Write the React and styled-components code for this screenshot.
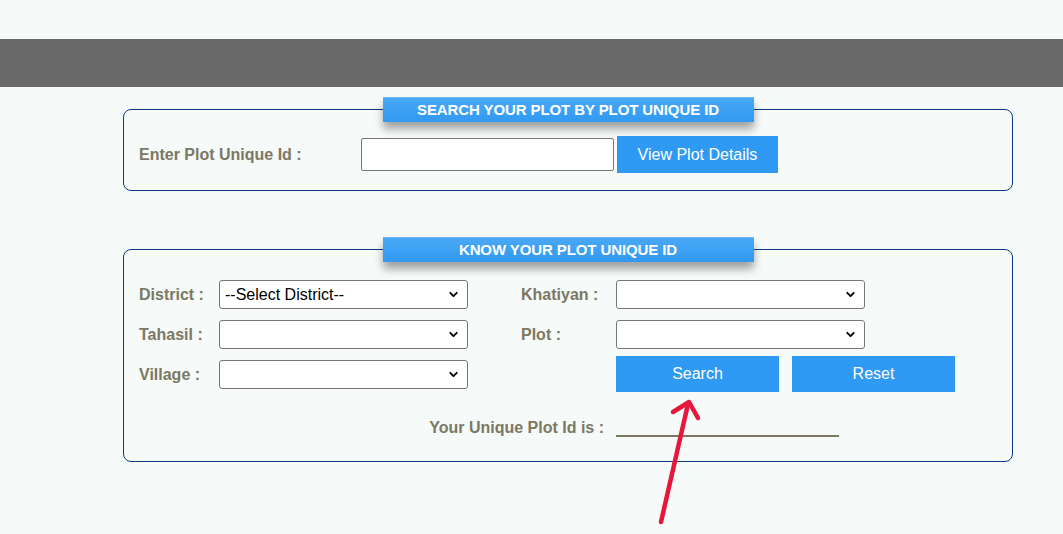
import styled, { createGlobalStyle } from "styled-components";
import { ChevronDown } from "lucide-react";

const GlobalStyle = createGlobalStyle`
  html, body {
    margin: 0;
    padding: 0;
    background: #f6faf9;
    font-family: "Liberation Sans", Arial, sans-serif;
  }
  * {
    box-sizing: border-box;
  }
`;

const Page = styled.div`
  position: relative;
  width: 100%;
  height: 534px;
  overflow: hidden;
  padding-top: 39px;
`;

const TopBar = styled.div`
  height: 48px;
  background-color: #696969;
`;

const Panel = styled.fieldset`
  width: 890px;
  margin: ${(p) => p.$top}px 0 0 123px;
  padding: ${(p) => p.$padTop}px 15px ${(p) => p.$padBottom}px;
  border: 1px solid #0d3a80;
  border-radius: 8px;
  min-width: 0;
`;

const Legend = styled.legend`
  width: 371px;
  height: 25px;
  margin: 0 auto;
  padding: 0;
  background: linear-gradient(#4aa8f6, #3099f1);
  border-top: 1px solid #6bb8f7;
  box-shadow: 0 7px 8px rgba(0, 0, 0, 0.35);
  color: #ffffff;
  font-size: 15px;
  font-weight: bold;
  letter-spacing: -0.1px;
  line-height: 24px;
  text-align: center;
`;

const Row = styled.div`
  display: flex;
  align-items: center;
`;

const Label = styled.label`
  width: ${(p) => p.$width}px;
  flex-shrink: 0;
  font-size: 16px;
  font-weight: bold;
  color: #7b7863;
`;

const TextInput = styled.input`
  width: 253px;
  height: 33px;
  margin-right: 3px;
  border: 1px solid #767676;
  border-radius: 2px;
  background: #ffffff;
  font-size: 16px;
`;

const Button = styled.button`
  width: ${(p) => p.$width}px;
  height: ${(p) => p.$height}px;
  border: none;
  background-color: #2f9af3;
  color: #ffffff;
  font-family: "Liberation Sans", Arial, sans-serif;
  font-size: 16px;
  cursor: pointer;
`;

const Columns = styled.div`
  display: flex;
`;

const Column = styled.div`
  display: flex;
  flex-direction: column;
  gap: 10px;
  width: ${(p) => p.$width}px;
`;

const Field = styled.div`
  display: flex;
  align-items: center;
  height: 30px;
`;

const SelectWrap = styled.div`
  position: relative;
  align-self: flex-start;
  width: 249px;
  height: 29px;

  svg {
    position: absolute;
    right: 8px;
    top: 8px;
    pointer-events: none;
    color: #000000;
  }
`;

const Select = styled.select`
  appearance: none;
  width: 100%;
  height: 100%;
  border: 1px solid #767676;
  border-radius: 3px;
  background: #ffffff;
  color: #000000;
  font-family: "Liberation Sans", Arial, sans-serif;
  font-size: 16px;
  padding: 0 24px 0 5px;
`;

const ButtonRow = styled.div`
  display: flex;
  gap: 13px;
  margin-top: -4px;
  padding-left: 95px;
`;

const ResultRow = styled.div`
  display: flex;
  align-items: baseline;
  margin-top: 26px;
  line-height: 20px;
`;

const ResultLabel = styled.span`
  width: 477px;
  padding-right: 12px;
  text-align: right;
  font-size: 16px;
  font-weight: bold;
  color: #7b7863;
`;

const Blank = styled.span`
  position: relative;
  top: 4px;
  display: inline-block;
  width: 223px;
  height: 14px;
  border-bottom: 2px solid #7b7863;
`;

const Arrow = styled.svg`
  position: absolute;
  left: 640px;
  top: 390px;
  pointer-events: none;
`;

const Dropdown = ({ placeholder }) => (
  <SelectWrap>
    <Select defaultValue="">
      <option value="">{placeholder || ""}</option>
    </Select>
    <ChevronDown size={13} strokeWidth={3.5} />
  </SelectWrap>
);

export default function App() {
  return (
    <>
      <GlobalStyle />
      <Page>
        <TopBar />

        <Panel $top={10} $padTop={14} $padBottom={17}>
          <Legend>SEARCH YOUR PLOT BY PLOT UNIQUE ID</Legend>
          <Row>
            <Label $width={222}>Enter Plot Unique Id :</Label>
            <TextInput type="text" />
            <Button $width={161} $height={37}>View Plot Details</Button>
          </Row>
        </Panel>

        <Panel $top={46} $padTop={18} $padBottom={23}>
          <Legend>KNOW YOUR PLOT UNIQUE ID</Legend>
          <Columns>
            <Column $width={382}>
              <Field>
                <Label $width={80}>District :</Label>
                <Dropdown placeholder="--Select District--" />
              </Field>
              <Field>
                <Label $width={80}>Tahasil :</Label>
                <Dropdown />
              </Field>
              <Field>
                <Label $width={80}>Village :</Label>
                <Dropdown />
              </Field>
            </Column>
            <Column $width={440}>
              <Field>
                <Label $width={95}>Khatiyan :</Label>
                <Dropdown />
              </Field>
              <Field>
                <Label $width={95}>Plot :</Label>
                <Dropdown />
              </Field>
              <ButtonRow>
                <Button $width={163} $height={36}>Search</Button>
                <Button $width={163} $height={36}>Reset</Button>
              </ButtonRow>
            </Column>
          </Columns>
          <ResultRow>
            <ResultLabel>Your Unique Plot Id is :</ResultLabel>
            <Blank />
          </ResultRow>
        </Panel>

        <Arrow width="80" height="144" viewBox="0 0 80 144">
          <g stroke="#e5173a" strokeWidth="4.5" strokeLinecap="round" strokeLinejoin="round" fill="none">
            <line x1="21" y1="132" x2="48" y2="14" />
            <polyline points="33,22 49,12 58,28" />
          </g>
        </Arrow>
      </Page>
    </>
  );
}
